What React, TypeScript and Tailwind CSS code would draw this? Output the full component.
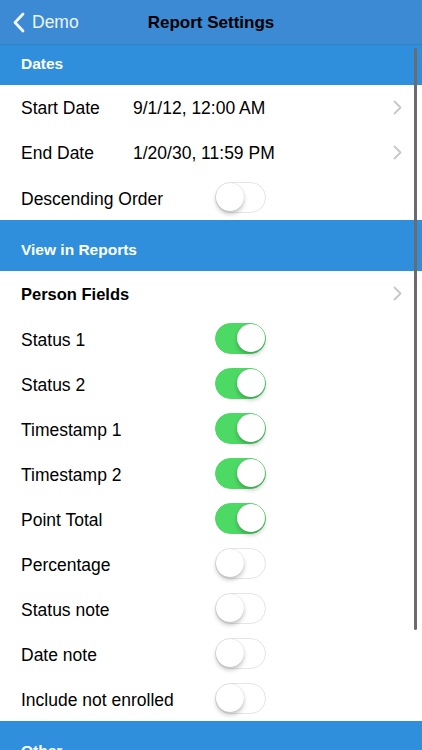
import React from "react";

const font = { fontFamily: '"Liberation Sans", Arial, sans-serif' };

function Switch({ on }: { on: boolean }) {
  return (
    <div
      className={
        "relative w-[51px] h-[31px] rounded-full " +
        (on ? "bg-[#4cd964] border border-[#4cd964]" : "bg-white border-[1.5px] border-[#e5e5e5]")
      }
    >
      <div
        className={
          "absolute top-[0px] w-[28px] h-[28px] rounded-full bg-white shadow-[0_3px_4px_rgba(0,0,0,0.22),0_0_1px_rgba(0,0,0,0.2)] " +
          (on ? "right-[0px]" : "left-[0px]")
        }
      />
    </div>
  );
}

function Chevron() {
  return (
    <svg width="9" height="15" viewBox="0 0 9 15" className="mr-[20px]">
      <path d="M1.5 1.5 L7.5 7.5 L1.5 13.5" fill="none" stroke="#c7c7cc" strokeWidth="1.8" strokeLinecap="round" strokeLinejoin="round" />
    </svg>
  );
}

function Header({ title, h }: { title: string; h: string }) {
  return (
    <div className={"bg-[#2f8fdc] flex items-end pl-[21px] " + h}>
      <span className="text-white text-[15.5px] font-bold pb-[10px]">{title}</span>
    </div>
  );
}

function DateRow({ label, value }: { label: string; value: string }) {
  return (
    <div className="h-[45px] flex items-center bg-white">
      <span className="pl-[21px] w-[133px] shrink-0 text-[17.5px] text-black mt-[2px]">{label}</span>
      <span className="flex-1 text-[17.5px] text-black mt-[2px]">{value}</span>
      <Chevron />
    </div>
  );
}

function SwitchRow({ label, on }: { label: string; on: boolean }) {
  return (
    <div className="h-[45px] flex items-center bg-white">
      <span className="pl-[21px] w-[215px] shrink-0 text-[17.5px] text-black mt-[3px]">{label}</span>
      <Switch on={on} />
    </div>
  );
}

export default function App() {
  return (
    <div style={font} className="relative w-[422px] h-[750px] overflow-hidden bg-white flex flex-col">
      <div className="h-[45px] shrink-0 bg-[#3b8ad3] border-b border-[#3580c4] flex items-center relative">
        <div className="flex items-center pl-[13px] gap-[7px]">
          <svg width="12" height="21" viewBox="0 0 12 21">
            <path d="M10 2 L2 10.5 L10 19" fill="none" stroke="#f2f7fc" strokeWidth="2.8" strokeLinecap="round" strokeLinejoin="round" />
          </svg>
          <span className="text-[17.5px] text-[#eef5fc]">Demo</span>
        </div>
        <div className="absolute inset-0 flex items-center justify-center pointer-events-none">
          <span className="text-[17px] font-bold text-black mt-[1px]">Report Settings</span>
        </div>
      </div>
      <div className="flex flex-col">
        <Header title="Dates" h="h-[40px]" />
        <DateRow label="Start Date" value="9/1/12, 12:00 AM" />
        <DateRow label="End Date" value="1/20/30, 11:59 PM" />
        <SwitchRow label="Descending Order" on={false} />
        <Header title="View in Reports" h="h-[51px]" />
        <div className="h-[45px] flex items-center bg-white">
          <span className="pl-[21px] flex-1 text-[16.5px] font-bold text-black mt-[1px]">Person Fields</span>
          <Chevron />
        </div>
        <SwitchRow label="Status 1" on={true} />
        <SwitchRow label="Status 2" on={true} />
        <SwitchRow label="Timestamp 1" on={true} />
        <SwitchRow label="Timestamp 2" on={true} />
        <SwitchRow label="Point Total" on={true} />
        <SwitchRow label="Percentage" on={false} />
        <SwitchRow label="Status note" on={false} />
        <SwitchRow label="Date note" on={false} />
        <SwitchRow label="Include not enrolled" on={false} />
        <Header title="Other" h="h-[51px]" />
      </div>
      <div className="absolute right-[5px] top-[48px] w-[3px] h-[582px] rounded-full bg-[#6b6b6b]" />
    </div>
  );
}
